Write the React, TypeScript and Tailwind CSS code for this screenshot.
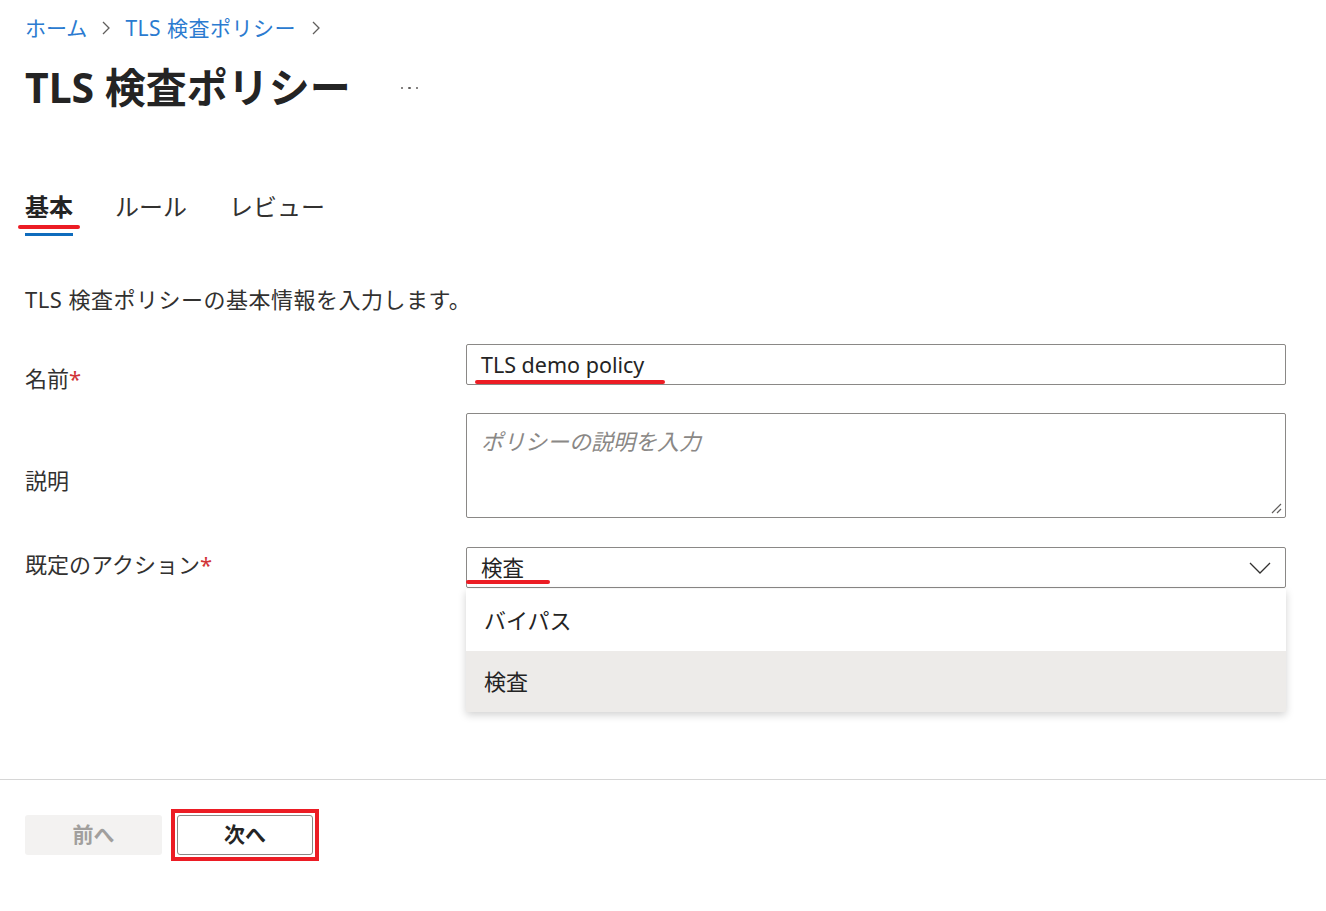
import React from "react";

const font = { fontFamily: '"Noto Sans", "Noto Sans CJK JP", sans-serif' };

export default function App() {
  return (
    <div className="w-[1326px] h-[911px] bg-white text-[#323130] relative overflow-hidden" style={font}>
      <div className="px-[25px]">
        {/* Breadcrumb */}
        <div className="pt-[14px] flex items-center text-[21px] leading-[28px]">
          <span className="text-[#2b7bd0]">ホーム</span>
          <svg width="12" height="16" viewBox="0 0 12 16" className="mx-[13px]" fill="none">
            <path d="M3 2 L9 8 L3 14" stroke="#605e5c" strokeWidth="1.3" />
          </svg>
          <span className="text-[#2b7bd0] tracking-[0.5px]">TLS 検査ポリシー</span>
          <svg width="12" height="16" viewBox="0 0 12 16" className="ml-[14px]" fill="none">
            <path d="M3 2 L9 8 L3 14" stroke="#605e5c" strokeWidth="1.3" />
          </svg>
        </div>

        {/* Title */}
        <div className="mt-[22px] flex items-center h-[46px]">
          <h1 className="text-[41px] leading-[46px] font-bold text-[#242424]">TLS 検査ポリシー</h1>
          <span className="ml-[50px] flex gap-[5px] items-center mt-[2px]">
            <span className="w-[2.5px] h-[2.5px] rounded-full bg-[#605e5c]" />
            <span className="w-[2.5px] h-[2.5px] rounded-full bg-[#605e5c]" />
            <span className="w-[2.5px] h-[2.5px] rounded-full bg-[#605e5c]" />
          </span>
        </div>

        {/* Tabs */}
        <div className="mt-[81px] flex items-start gap-[42px] h-[47px]">
          <div className="relative h-[47px]">
            <span className="text-[24px] leading-[32px] font-bold text-[#242424]">基本</span>
            <div className="absolute left-0 right-0 top-[42px] h-[3px] bg-[#0f6cbd]" />
            <div className="absolute left-[-7px] right-[-7px] top-[34px] h-[4px] rounded-full bg-[#ec1c24]" />
          </div>
          <span className="text-[24px] leading-[32px] text-[#323130]">ルール</span>
          <span className="text-[24px] leading-[32px] text-[#323130]">レビュー</span>
        </div>

        {/* Description */}
        <p className="mt-[47px] text-[22px] leading-[28px] tracking-[0.5px]">TLS 検査ポリシーの基本情報を入力します。</p>

        {/* Form */}
        <div className="mt-[31px] flex flex-col">
          {/* Name */}
          <div className="flex h-[41px]">
            <div className="w-[441px] pt-[20px] text-[22px] leading-[28px] whitespace-nowrap">
              名前<span className="text-[#d13438]">*</span>
            </div>
            <div className="relative w-[820px] h-[41px] border border-[#8a8886] rounded-[2px] flex items-center px-[14px]">
              <span className="text-[21.5px] leading-[28px] text-[#242424]">TLS demo policy</span>
              <div className="absolute left-[8px] top-[35px] w-[190px] h-[4px] rounded-full bg-[#ec1c24]" />
            </div>
          </div>

          {/* Description textarea */}
          <div className="flex mt-[28px] h-[105px]">
            <div className="w-[441px] pt-[53px] text-[22px] leading-[28px]">説明</div>
            <div className="relative w-[820px] h-[105px] border border-[#8a8886] rounded-[2px] px-[14px] pt-[12px]">
              <span className="italic text-[22px] leading-[30px] text-[#8a8886]">ポリシーの説明を入力</span>
              <svg className="absolute right-[3px] bottom-[3px]" width="12" height="12" viewBox="0 0 12 12" fill="none">
                <path d="M11 2 L2 11 M11 7 L7 11" stroke="#605e5c" strokeWidth="1.2" />
              </svg>
            </div>
          </div>

          {/* Default action */}
          <div className="flex mt-[29px] h-[41px]">
            <div className="w-[441px] pt-[3px] text-[22px] leading-[28px] whitespace-nowrap">
              既定のアクション<span className="text-[#d13438]">*</span>
            </div>
            <div className="relative w-[820px] h-[41px] border border-[#8a8886] rounded-[2px] flex items-center justify-between pl-[14px] pr-[14px]">
              <span className="text-[21.5px] leading-[28px] text-[#242424]">検査</span>
              <svg width="22" height="14" viewBox="0 0 22 14" fill="none">
                <path d="M1 2 L11 12 L21 2" stroke="#323130" strokeWidth="1.3" />
              </svg>
              <div className="absolute left-[-1px] top-[32px] w-[84px] h-[4px] rounded-full bg-[#ec1c24]" />

              {/* Dropdown */}
              <div className="absolute left-[-1px] top-[41px] w-[820px] bg-white shadow-[0_3px_8px_rgba(0,0,0,0.18)] z-10">
                <div className="h-[62px] flex items-center px-[18px] text-[22px] text-[#242424]">バイパス</div>
                <div className="h-[61px] flex items-center px-[18px] text-[22px] text-[#242424] bg-[#edebe9]">検査</div>
              </div>
            </div>
          </div>
        </div>
      </div>

      {/* Separator */}
      <div className="mt-[191px] h-px bg-[#d6d6d6] w-full" />

      {/* Footer buttons */}
      <div className="px-[25px] mt-[29px] flex items-center">
        <button className="w-[137px] h-[40px] rounded-[3px] bg-[#f3f2f1] text-[#a19f9d] text-[21px] font-bold">前へ</button>
        <div className="ml-[9px] border-[4px] border-[#ec1c24] p-[2px]">
          <button className="w-[136px] h-[40px] rounded-[3px] border border-[#8a8886] bg-white text-[#242424] text-[21px] font-bold">次へ</button>
        </div>
      </div>
    </div>
  );
}
